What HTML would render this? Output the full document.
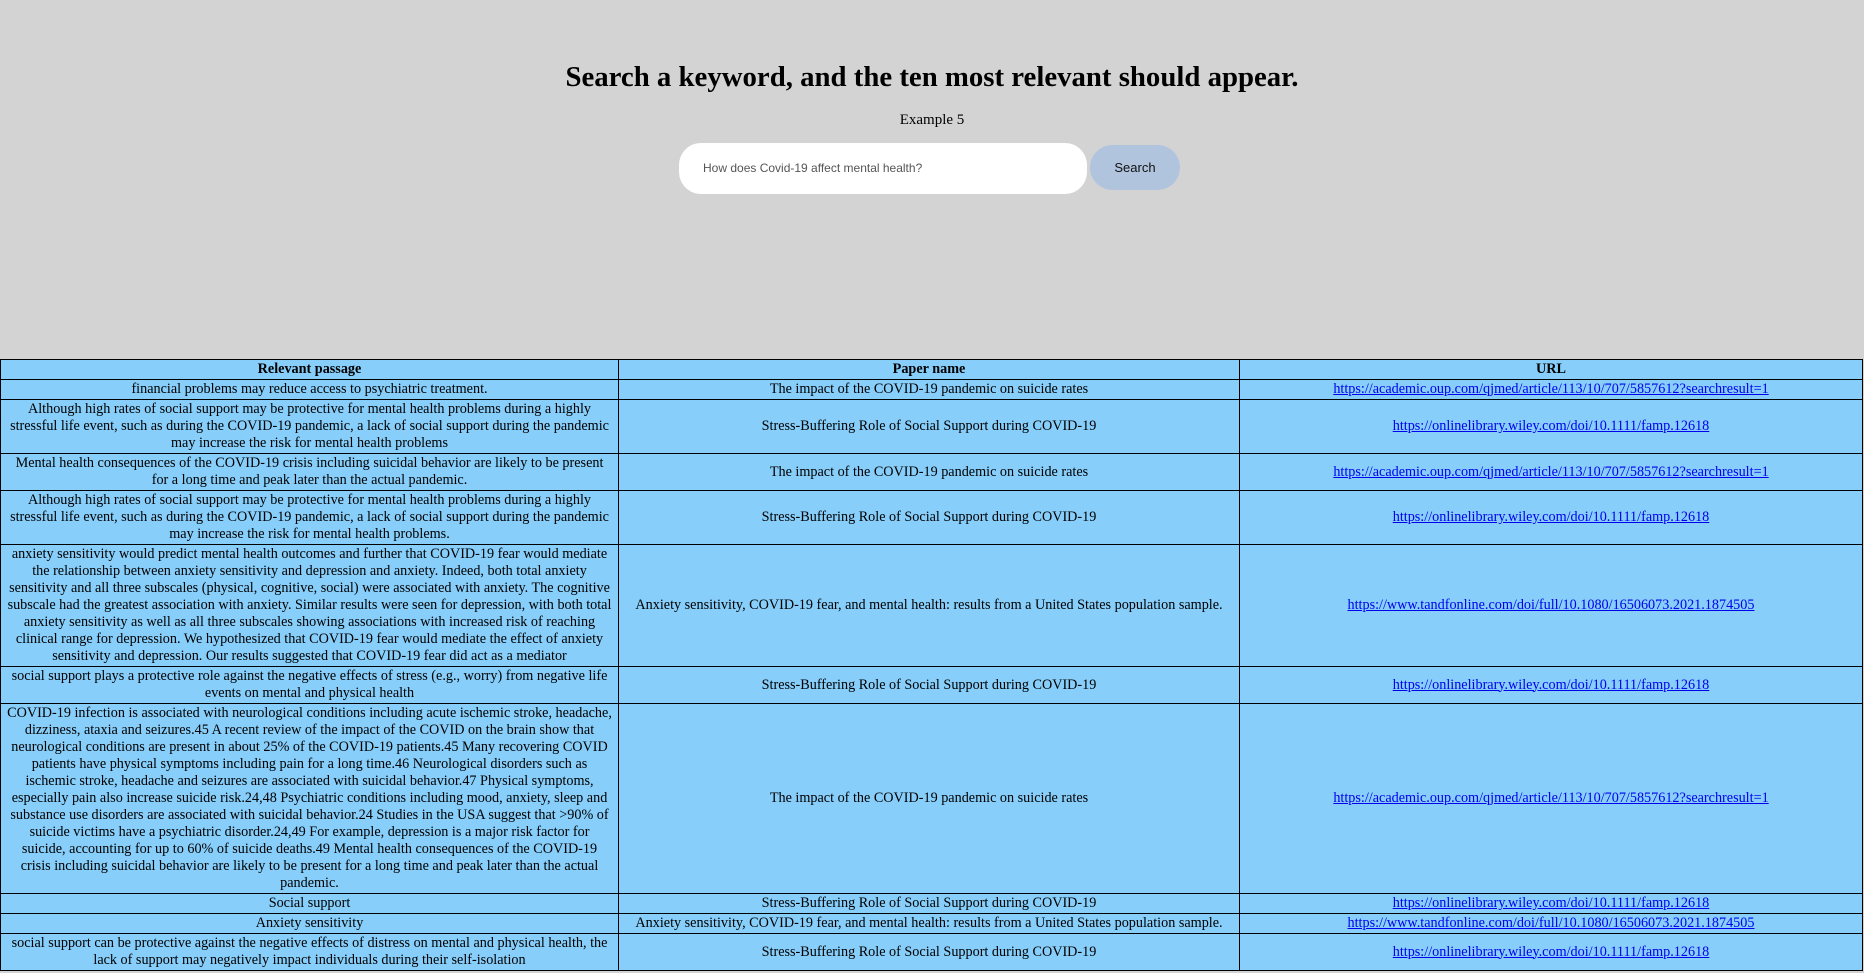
<!DOCTYPE html>
<html><head><meta charset="utf-8"><style>
html,body{margin:0;padding:0;background:#d3d3d3;font-family:"Liberation Serif",serif;color:#000;overflow:hidden}
body{width:1864px;height:973px;position:relative}
h1{position:absolute;top:61px;left:0;width:1864px;text-align:center;font-size:28.8px;margin:0;font-weight:bold}
.ex{position:absolute;top:112px;left:0;width:1864px;text-align:center;font-size:15px}
.inp{position:absolute;left:679px;top:143px;width:408px;height:51px;background:#fff;border-radius:22px;font-family:"Liberation Sans",sans-serif;font-size:12px;color:#555;line-height:51px;box-sizing:border-box;padding-left:24px}
.btn{position:absolute;left:1090px;top:145px;width:90px;height:45px;background:#b0c4de;border-radius:23px;font-family:"Liberation Sans",sans-serif;font-size:13px;line-height:45px;text-align:center;color:#111}
table{position:absolute;top:359px;left:0;width:1862px;border-collapse:collapse;background:#87cefa;font-size:14.2px;table-layout:fixed}
td,th{border:1px solid #000;text-align:center;padding:1px 3px;line-height:17px}
td:first-child{padding:1px 6px}
th{font-weight:bold;padding:1px 3px}
a{color:#00e;text-decoration:underline}
</style></head><body>
<h1>Search a keyword, and the ten most relevant should appear.</h1>
<div class="ex">Example 5</div>
<div class="inp">How does Covid-19 affect mental health?</div>
<div class="btn">Search</div>
<table>
<colgroup><col style="width:618px"><col style="width:621px"><col style="width:623px"></colgroup>
<tr><th>Relevant passage</th><th>Paper name</th><th>URL</th></tr>
<tr><td>financial problems may reduce access to psychiatric treatment.</td><td>The impact of the COVID-19 pandemic on suicide rates</td><td><a>https://academic.oup.com/qjmed/article/113/10/707/5857612?searchresult=1</a></td></tr>
<tr><td>Although high rates of social support may be protective for mental health problems during a highly stressful life event, such as during the COVID-19 pandemic, a lack of social support during the pandemic may increase the risk for mental health problems</td><td>Stress-Buffering Role of Social Support during COVID-19</td><td><a>https://onlinelibrary.wiley.com/doi/10.1111/famp.12618</a></td></tr>
<tr><td>Mental health consequences of the COVID-19 crisis including suicidal behavior are likely to be present for a long time and peak later than the actual pandemic.</td><td>The impact of the COVID-19 pandemic on suicide rates</td><td><a>https://academic.oup.com/qjmed/article/113/10/707/5857612?searchresult=1</a></td></tr>
<tr><td>Although high rates of social support may be protective for mental health problems during a highly stressful life event, such as during the COVID-19 pandemic, a lack of social support during the pandemic may increase the risk for mental health problems.</td><td>Stress-Buffering Role of Social Support during COVID-19</td><td><a>https://onlinelibrary.wiley.com/doi/10.1111/famp.12618</a></td></tr>
<tr><td>anxiety sensitivity would predict mental health outcomes and further that COVID-19 fear would mediate the relationship between anxiety sensitivity and depression and anxiety. Indeed, both total anxiety sensitivity and all three subscales (physical, cognitive, social) were associated with anxiety. The cognitive subscale had the greatest association with anxiety. Similar results were seen for depression, with both total anxiety sensitivity as well as all three subscales showing associations with increased risk of reaching clinical range for depression. We hypothesized that COVID-19 fear would mediate the effect of anxiety sensitivity and depression. Our results suggested that COVID-19 fear did act as a mediator</td><td>Anxiety sensitivity, COVID-19 fear, and mental health: results from a United States population sample.</td><td><a>https://www.tandfonline.com/doi/full/10.1080/16506073.2021.1874505</a></td></tr>
<tr><td>social support plays a protective role against the negative effects of stress (e.g., worry) from negative life events on mental and physical health</td><td>Stress-Buffering Role of Social Support during COVID-19</td><td><a>https://onlinelibrary.wiley.com/doi/10.1111/famp.12618</a></td></tr>
<tr><td>COVID-19 infection is associated with neurological conditions including acute ischemic stroke, headache, dizziness, ataxia and seizures.45 A recent review of the impact of the COVID on the brain show that neurological conditions are present in about 25% of the COVID-19 patients.45 Many recovering COVID patients have physical symptoms including pain for a long time.46 Neurological disorders such as ischemic stroke, headache and seizures are associated with suicidal behavior.47 Physical symptoms, especially pain also increase suicide risk.24,48 Psychiatric conditions including mood, anxiety, sleep and substance use disorders are associated with suicidal behavior.24 Studies in the USA suggest that &gt;90% of suicide victims have a psychiatric disorder.24,49 For example, depression is a major risk factor for suicide, accounting for up to 60% of suicide deaths.49 Mental health consequences of the COVID-19 crisis including suicidal behavior are likely to be present for a long time and peak later than the actual pandemic.</td><td>The impact of the COVID-19 pandemic on suicide rates</td><td><a>https://academic.oup.com/qjmed/article/113/10/707/5857612?searchresult=1</a></td></tr>
<tr><td>Social support</td><td>Stress-Buffering Role of Social Support during COVID-19</td><td><a>https://onlinelibrary.wiley.com/doi/10.1111/famp.12618</a></td></tr>
<tr><td>Anxiety sensitivity</td><td>Anxiety sensitivity, COVID-19 fear, and mental health: results from a United States population sample.</td><td><a>https://www.tandfonline.com/doi/full/10.1080/16506073.2021.1874505</a></td></tr>
<tr><td>social support can be protective against the negative effects of distress on mental and physical health, the lack of support may negatively impact individuals during their self-isolation</td><td>Stress-Buffering Role of Social Support during COVID-19</td><td><a>https://onlinelibrary.wiley.com/doi/10.1111/famp.12618</a></td></tr>
</table>
</body></html>
